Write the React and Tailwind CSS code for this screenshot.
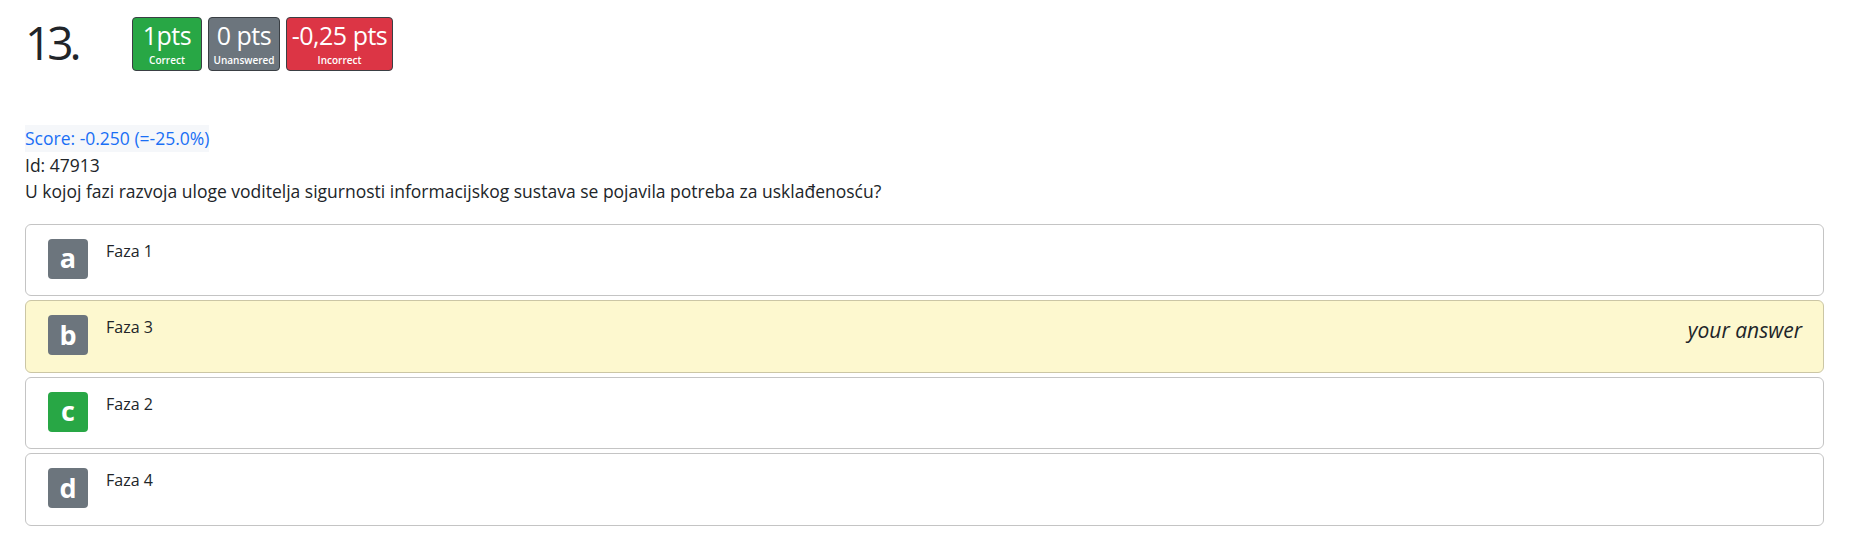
import React from "react";

const font = { fontFamily: '"Open Sans", "Noto Sans", sans-serif' };

function PtsBadge({ value, label, bg, w }) {
  return (
    <div
      className={`flex flex-col items-center border border-[#3a3f44] rounded-[4px] text-white h-[54px] ${bg} ${w}`}
    >
      <div className="text-[25px] leading-none mt-[5px] whitespace-nowrap tracking-[-0.5px]">{value}</div>
      <div className="text-[10px] leading-none mt-[7px] font-semibold whitespace-nowrap">{label}</div>
    </div>
  );
}

function Option({ letter, text, letterBg, selected }) {
  return (
    <div
      className={`h-[72.5px] rounded-[6px] border flex items-start pt-[14px] pl-[22px] pr-[21px] ${
        selected ? "bg-[#fdf8cf] border-[#cbc6a5]" : "bg-white border-[#c4c4c4]"
      }`}
    >
      <div
        className={`w-[40px] h-[40px] rounded-[4px] flex items-center justify-center text-white font-bold text-[27px] leading-none pb-[2px] ${letterBg}`}
      >
        {letter}
      </div>
      <div className="ml-[18px] text-[16px] leading-6 text-[#212529]">{text}</div>
      {selected && (
        <div className="ml-auto italic text-[21px] leading-[30px] text-[#212529]">your answer</div>
      )}
    </div>
  );
}

export default function App() {
  return (
    <div className="bg-white w-[1855px] h-[560px] pl-[25px] pr-[31px] pt-[17px] text-[#212529]" style={font}>
      <div className="flex items-start">
        <div className="w-[107px] text-[46px] leading-none mt-[2px] tracking-[-4px] text-[#212529]">13.</div>
        <div className="flex gap-[6px]">
          <PtsBadge value="1pts" label="Correct" bg="bg-[#28a745]" w="w-[70px]" />
          <PtsBadge value="0 pts" label="Unanswered" bg="bg-[#6c757d]" w="w-[72px]" />
          <PtsBadge value="-0,25 pts" label="Incorrect" bg="bg-[#dc3545]" w="w-[107px]" />
        </div>
      </div>

      <div className="mt-[54px] text-[17.5px] leading-[26.5px]">
        <div>
          <span className="inline-block bg-[#f5f7fa] text-[#1a6ff5]">Score: -0.250 (=-25.0%)</span>
        </div>
        <div>Id: 47913</div>
        <div>U kojoj fazi razvoja uloge voditelja sigurnosti informacijskog sustava se pojavila potreba za usklađenosću?</div>
      </div>

      <div className="mt-[19px] flex flex-col gap-[4px]">
        <Option letter="a" text="Faza 1" letterBg="bg-[#6c757d]" />
        <Option letter="b" text="Faza 3" letterBg="bg-[#6c757d]" selected />
        <Option letter="c" text="Faza 2" letterBg="bg-[#28a745]" />
        <Option letter="d" text="Faza 4" letterBg="bg-[#6c757d]" />
      </div>
    </div>
  );
}
